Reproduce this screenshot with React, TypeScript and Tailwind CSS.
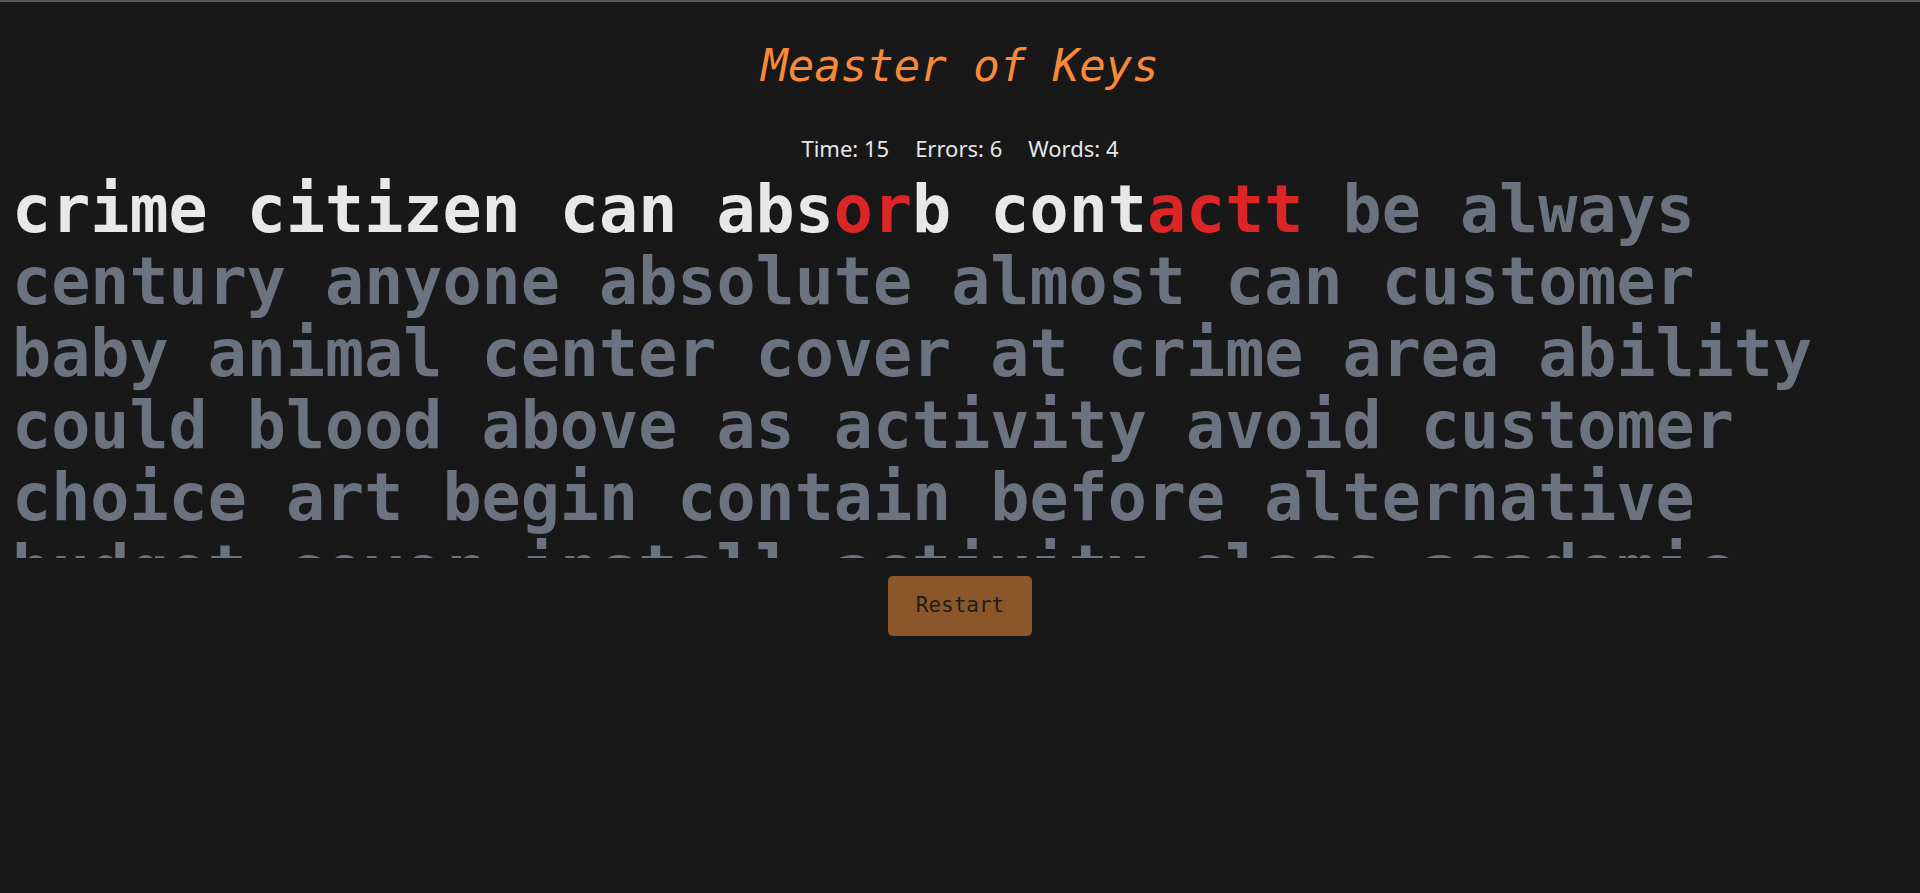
const mono = "font-['DejaVu_Sans_Mono','Liberation_Mono',monospace]";

// lines are laid out as the game wraps them at this width
const rest = [
  "century anyone absolute almost can customer",
  "baby animal center cover at crime area ability",
  "could blood above as activity avoid customer",
  "choice art begin contain before alternative",
  "budget cover install activity class academic",
];

function Stat({ label, value }: { label: string; value: number }) {
  return (
    <span>
      {label}: {value}
    </span>
  );
}

export default function App() {
  return (
    <div className="min-h-screen border-t-2 border-[#58585c] bg-[#181818] flex flex-col items-center">
      <h1 className={`${mono} mt-[38px] text-[44px] leading-[52px] italic text-[#f78a38]`}>
        Measter of Keys
      </h1>

      <div className="mt-[41px] flex gap-[26px] font-['Noto_Sans',sans-serif] text-[22px] leading-[30px] text-[#e5e7eb]">
        <Stat label="Time" value={15} />
        <Stat label="Errors" value={6} />
        <Stat label="Words" value={4} />
      </div>

      <div
        className={`${mono} mt-[11px] h-[384px] self-stretch overflow-hidden pl-[12px] text-[65px] leading-[72px] font-bold text-[#6b7280]`}
      >
        <div className="whitespace-pre">
          <span className="text-[#e8e8e8]">crime citizen can abs</span>
          <span className="text-[#dc2626]">or</span>
          <span className="text-[#e8e8e8]">b cont</span>
          <span className="text-[#dc2626]">actt</span>
          <span> be always</span>
        </div>
        {rest.map((line) => (
          <div key={line} className="whitespace-pre">
            {line}
          </div>
        ))}
      </div>

      <button
        className={`${mono} mt-[18px] flex h-[60px] w-[144px] items-center justify-center rounded-[5px] bg-[#8b572a] text-[21px] text-[#1c1c1c]`}
      >
        Restart
      </button>
    </div>
  );
}
